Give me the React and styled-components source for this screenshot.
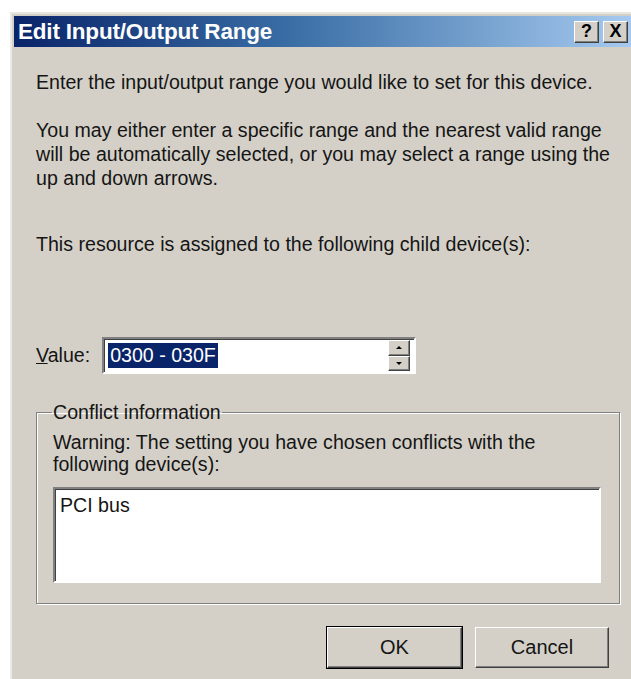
import React from 'react';
import styled, { createGlobalStyle } from 'styled-components';

const GlobalStyle = createGlobalStyle`
  html, body {
    margin: 0;
    padding: 0;
    background: #ffffff;
    overflow: hidden;
  }
  body {
    font-family: "Liberation Sans", Arial, sans-serif;
    color: #151515;
  }
`;

const Frame = styled.div`
  margin: 12px 0 0 10px;
  width: 621px;
  height: 680px;
  background: #d4d0c8;
  border-top: 2px solid #e8e6e1;
  border-left: 2px solid #eceae6;
  padding: 2px 0 0 2px;
  box-sizing: border-box;
  display: flex;
  flex-direction: column;
`;

const TitleBar = styled.div`
  height: 31px;
  flex: 0 0 31px;
  display: flex;
  align-items: center;
  padding-left: 4px;
  background: linear-gradient(to right, #0a246a 0%, #3a6ea5 45%, #a6caf0 100%);
`;

const Title = styled.span`
  flex: 1;
  color: #ffffff;
  font-weight: bold;
  font-size: 22.5px;
  letter-spacing: -0.2px;
`;

const CaptionButtons = styled.div`
  display: flex;
  gap: 4px;
  margin-right: 3px;
`;

const CaptionButton = styled.div`
  width: 25px;
  height: 22px;
  box-sizing: border-box;
  background: #d4d0c8;
  border: 1px solid;
  border-color: #ffffff #404040 #404040 #ffffff;
  box-shadow: inset -1px -1px 0 #808080;
  display: flex;
  align-items: center;
  justify-content: center;
  font-weight: bold;
  font-size: 18px;
  color: #000;
`;

const Body = styled.div`
  flex: 1;
  padding: 23px 0 0 22px;
  display: flex;
  flex-direction: column;
`;

const Text = styled.p`
  margin: 0 0 ${(p) => p.gap || 0}px;
  width: ${(p) => p.w || 578}px;
  font-size: 19.6px;
  line-height: ${(p) => p.lh || 24}px;
`;

const ValueRow = styled.div`
  display: flex;
  align-items: center;
  gap: 12px;
  margin-top: 81px;
`;

const Label = styled.span`
  font-size: 19.6px;
  u { text-decoration: underline; }
`;

const SpinBox = styled.div`
  width: 314px;
  height: 37px;
  box-sizing: border-box;
  background: #ffffff;
  border: 2px solid;
  border-color: #808080 #ffffff #ffffff #808080;
  box-shadow: inset 1px 1px 0 #404040;
  display: flex;
  align-items: center;
  padding: 0 4px 0 4px;
`;

const Selected = styled.span`
  background: #0a246a;
  color: #ffffff;
  font-size: 19.6px;
  line-height: 25px;
  padding: 0 2px;
`;

const Spacer = styled.div`
  flex: 1;
`;

const Spinner = styled.div`
  display: flex;
  flex-direction: column;
  width: 22px;
  height: 31px;
`;

const SpinArrow = styled.div`
  flex: 1;
  background: #d4d0c8;
  border: 1px solid;
  border-color: #ffffff #404040 #404040 #ffffff;
  box-shadow: inset -1px -1px 0 #808080;
  display: flex;
  align-items: center;
  justify-content: center;
  &::after {
    content: '';
    border-left: 3px solid transparent;
    border-right: 3px solid transparent;
    ${(p) => (p.down ? 'border-top: 3px solid #000;' : 'border-bottom: 3px solid #000;')}
  }
`;

const Group = styled.fieldset`
  margin: 28px 0 0 0;
  padding: 9px 18px 20px 16px;
  border: 1px solid #808080;
  box-shadow: 1px 1px 0 #ffffff, inset 1px 1px 0 #ffffff;
  width: 584px;
  box-sizing: border-box;
`;

const Legend = styled.legend`
  font-size: 19.6px;
  line-height: 20px;
  padding: 0 1px;
  margin-left: -1px;
`;

const ListBox = styled.div`
  margin-top: 12px;
  height: 96px;
  box-sizing: border-box;
  background: #ffffff;
  border: 2px solid;
  border-color: #808080 #ffffff #ffffff #808080;
  box-shadow: inset 1px 1px 0 #404040;
  padding: 5px 0 0 5px;
  font-size: 19.6px;
`;

const Buttons = styled.div`
  display: flex;
  justify-content: flex-end;
  gap: 13px;
  margin-top: 23px;
  width: 573px;
`;

const Button = styled.button`
  width: ${(p) => p.w}px;
  height: 41px;
  background: #d4d0c8;
  font-family: "Liberation Sans", Arial, sans-serif;
  font-size: 20px;
  color: #151515;
  border: 1px solid;
  border-color: #ffffff #404040 #404040 #ffffff;
  box-shadow: inset -1px -1px 0 #808080;
  outline: ${(p) => (p.primary ? '1px solid #000' : 'none')};
  padding: 0;
`;

export default function App() {
  return (
    <>
      <GlobalStyle />
      <Frame>
        <TitleBar>
          <Title>Edit Input/Output Range</Title>
          <CaptionButtons>
            <CaptionButton>?</CaptionButton>
            <CaptionButton>X</CaptionButton>
          </CaptionButtons>
        </TitleBar>
        <Body>
          <Text gap={24}>Enter the input/output range you would like to set for this device.</Text>
          <Text gap={42}>
            You may either enter a specific range and the nearest valid range will be
            automatically selected, or you may select a range using the up and down arrows.
          </Text>
          <Text>This resource is assigned to the following child device(s):</Text>
          <ValueRow>
            <Label><u>V</u>alue:</Label>
            <SpinBox>
              <Selected>0300 - 030F</Selected>
              <Spacer />
              <Spinner>
                <SpinArrow />
                <SpinArrow down />
              </Spinner>
            </SpinBox>
          </ValueRow>
          <Group>
            <Legend>Conflict information</Legend>
            <Text w={510} lh={22}>
              Warning: The setting you have chosen conflicts with the following device(s):
            </Text>
            <ListBox>PCI bus</ListBox>
          </Group>
          <Buttons>
            <Button primary w={135}>OK</Button>
            <Button w={134}>Cancel</Button>
          </Buttons>
        </Body>
      </Frame>
    </>
  );
}
